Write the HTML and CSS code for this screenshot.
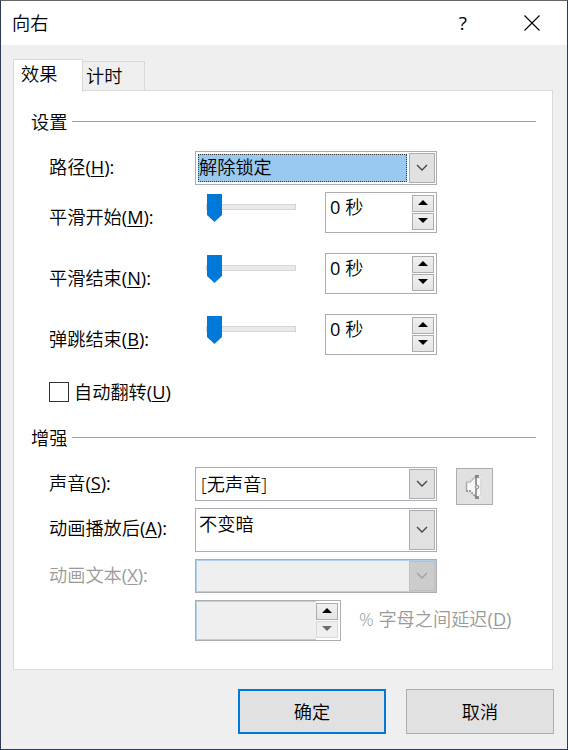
FILE: index.html
```html
<!DOCTYPE html>
<html lang="zh-CN">
<head>
  <meta charset="UTF-8">
  <title>向右</title>
  <link rel="stylesheet" href="styles.css">
</head>
<body>
  <div class="dialog">
    <div class="titlebar">
      <span class="title">向右</span>
      <span class="help">?</span>
      <svg class="close" width="16" height="16" viewBox="0 0 16 16"><path d="M.5 .5l15 15M15.5 .5l-15 15" fill="none" stroke="#000" stroke-width="1.1"/></svg>
    </div>

    <div class="tabs">
      <div class="tab active">效果</div>
      <div class="tab">计时</div>
    </div>

    <div class="panel">
      <div class="section"><span>设置</span></div>

      <div class="row">
        <label class="label">路径<span class="key">(<u>H</u>):</span></label>
        <div class="select">
          <span class="value selected">解除锁定</span>
          <span class="drop"><svg width="12" height="8" viewBox="0 0 12 8"><path d="M1 1l5 5 5-5"/></svg></span>
        </div>
      </div>

      <div class="row row-spin first">
        <label class="label">平滑开始<span class="key">(<u>M</u>):</span></label>
        <svg class="slider" width="130" height="41"><rect class="track" x="11.5" y="12.5" width="89" height="5"/><path class="thumb" d="M12 2h15v21l-7.5 7-7.5-7z"/></svg>
        <div class="spin">
          <span class="value"><span class="key">0</span> 秒</span>
          <span class="arrows">
            <span class="arrow"><svg width="10" height="5"><path d="M5 0l5 5H0z"/></svg></span>
            <span class="arrow"><svg width="10" height="5"><path d="M0 0h10L5 5z"/></svg></span>
          </span>
        </div>
      </div>

      <div class="row row-spin">
        <label class="label">平滑结束<span class="key">(<u>N</u>):</span></label>
        <svg class="slider" width="130" height="41"><rect class="track" x="11.5" y="12.5" width="89" height="5"/><path class="thumb" d="M12 2h15v21l-7.5 7-7.5-7z"/></svg>
        <div class="spin">
          <span class="value"><span class="key">0</span> 秒</span>
          <span class="arrows">
            <span class="arrow"><svg width="10" height="5"><path d="M5 0l5 5H0z"/></svg></span>
            <span class="arrow"><svg width="10" height="5"><path d="M0 0h10L5 5z"/></svg></span>
          </span>
        </div>
      </div>

      <div class="row row-spin">
        <label class="label">弹跳结束<span class="key">(<u>B</u>):</span></label>
        <svg class="slider" width="130" height="41"><rect class="track" x="11.5" y="12.5" width="89" height="5"/><path class="thumb" d="M12 2h15v21l-7.5 7-7.5-7z"/></svg>
        <div class="spin">
          <span class="value"><span class="key">0</span> 秒</span>
          <span class="arrows">
            <span class="arrow"><svg width="10" height="5"><path d="M5 0l5 5H0z"/></svg></span>
            <span class="arrow"><svg width="10" height="5"><path d="M0 0h10L5 5z"/></svg></span>
          </span>
        </div>
      </div>

      <div class="check-row">
        <span class="checkbox"></span>
        <label>自动翻转<span class="key">(<u>U</u>)</span></label>
      </div>

      <div class="section enhance"><span>增强</span></div>

      <div class="row">
        <label class="label">声音<span class="key">(<u>S</u>):</span></label>
        <div class="select">
          <span class="value sound">[无声音]</span>
          <span class="drop"><svg width="12" height="8" viewBox="0 0 12 8"><path d="M1 1l5 5 5-5"/></svg></span>
        </div>
        <div class="speaker">
          <svg width="18" height="26" viewBox="0 0 18 26">
            <path d="M1 8h4l6-6h4l2 4v14l-2 4h-4l-6-7H1z" fill="#f8f8f8"/>
            <path d="M1.500 8v9" stroke="#aaa" stroke-width="1.500"/>
            <path d="M1 8h4l6-6" fill="none" stroke="#bbb" stroke-width="1.500"/>
            <path d="M1 17h4l6 6" fill="none" stroke="#999" stroke-width="2" stroke-dasharray="2 1"/>
            <path d="M10 2.500h4M10 23.500h4" stroke="#888" stroke-width="3"/>
            <path d="M11 4v7M11 15v7" stroke="#999" stroke-width="2"/>
            <circle cx="12" cy="13" r="1.800" fill="#ddd" stroke="#888"/>
            <path d="M14 3.500l2 2v15l-2 2" fill="none" stroke="#c0c0c0"/>
          </svg>
        </div>
      </div>

      <div class="row row-after">
        <label class="label">动画播放后<span class="key">(<u>A</u>):</span></label>
        <div class="select tall">
          <span class="value">不变暗</span>
          <span class="drop"><svg width="12" height="8" viewBox="0 0 12 8"><path d="M1 1l5 5 5-5"/></svg></span>
        </div>
      </div>

      <div class="row row-text disabled">
        <label class="label">动画文本<span class="key">(<u>X</u>):</span></label>
        <div class="select">
          <span class="value"></span>
          <span class="drop"><svg width="12" height="8" viewBox="0 0 12 8"><path d="M1 1l5 5 5-5"/></svg></span>
        </div>
      </div>

      <div class="row row-delay disabled">
        <div class="spin">
          <span class="value"></span>
          <span class="arrows">
            <span class="arrow"><svg width="10" height="5"><path d="M5 0l5 5H0z"/></svg></span>
            <span class="arrow off"><svg width="10" height="5"><path d="M0 0h10L5 5z"/></svg></span>
          </span>
        </div>
        <label class="suffix">% 字母之间延迟<span class="key">(<u>D</u>)</span></label>
      </div>
    </div>

    <div class="buttons">
      <button class="btn btn-default">确定</button>
      <button class="btn">取消</button>
    </div>
  </div>
</body>
</html>
```

FILE: styles.css
```css
* {
  margin: 0;
  padding: 0;
  box-sizing: border-box;
}

body {
  width: 568px;
  height: 750px;
  font-family: "Open Sans", "Noto Sans CJK SC", sans-serif;
  font-size: 18.2px;
  font-weight: 350;
  line-height: 24px;
  color: #000;
  overflow: hidden;
}

svg {
  display: block;
  flex: none;
}

u {
  text-underline-offset: 2px;
  text-decoration-thickness: 1px;
}

.key {
  font-weight: 400;
}

.dialog {
  height: 750px;
  background: #efefef;
  border: 1px solid #2f3b54;
  border-top-color: #666;
}

.titlebar {
  display: flex;
  align-items: center;
  height: 44px;
  padding: 0 27px 0 11px;
  background: #fff;
}

.title {
  flex: 1;
}

.help {
  font-size: 19px;
  font-weight: 400;
  margin-right: 57px;
}

.tabs {
  display: flex;
  align-items: flex-end;
  height: 46px;
  padding-left: 12px;
}

.tab {
  width: 62px;
  height: 30px;
  padding: 2px 0 0 3px;
  border: 1px solid #d9d9d9;
  border-left: 0;
  border-bottom: 0;
}

.tab.active {
  position: relative;
  width: 70px;
  height: 33px;
  margin-bottom: -1px;
  padding: 2px 0 0 7px;
  background: #fff;
  border-left: 1px solid #d9d9d9;
}

.panel {
  width: 540px;
  height: 580px;
  margin-left: 12px;
  margin-top: -1px;
  padding-top: 19px;
  background: #fff;
  border: 1px solid #d9d9d9;
}

.section {
  display: flex;
  height: 24px;
  margin: 0 16px 17px 17px;
}

.section span {
  width: 41px;
}

.section::after {
  content: "";
  flex: 1;
  height: 1px;
  margin-top: 11px;
  background: #a0a0a0;
}

.section.enhance {
  margin-top: 22px;
}

.row {
  display: flex;
  align-items: flex-start;
  padding-left: 35px;
}

.row .label {
  width: 146px;
  margin-top: 4px;
  white-space: nowrap;
}

.row-spin {
  margin-top: 20px;
}

.row-spin.first {
  margin-top: 7px;
}

.row-spin .label {
  margin-top: 13px;
}

.select {
  display: flex;
  width: 242px;
  height: 34px;
  padding: 1px;
  border: 1px solid #abadb3;
}

.select.tall {
  height: 44px;
}

.select .value {
  flex: 1;
  padding: 2px 0 0 2px;
}

.select .value.sound {
  padding: 3px 0 0 4px;
}

.select .value.selected {
  margin: 1px 2px 1px 1px;
  padding: 0;
  background: #99c9ef;
  border: 1px dotted #333;
}

.drop {
  display: flex;
  align-items: center;
  justify-content: center;
  width: 26px;
  background: #e1e1e1;
  border: 1px solid #adadad;
}

.drop path {
  fill: none;
  stroke: #444;
  stroke-width: 1.3;
}

.track {
  fill: #e7eaea;
  stroke: #d6d6d6;
}

.thumb {
  fill: #0078d7;
}

.spin {
  display: flex;
  width: 112px;
  height: 41px;
  border: 1px solid #abadb3;
}

.spin .value {
  flex: 1;
  padding: 2px 0 0 4px;
}

.arrows {
  display: flex;
  flex-direction: column;
  gap: 1px;
  width: 24px;
  padding: 2px 2px 2px 0;
}

.arrow {
  display: flex;
  justify-content: center;
  width: 22px;
  height: 17px;
  padding-top: 4px;
  background: linear-gradient(#f0f0f0, #e4e4e4);
  border: 1px solid #acacac;
}

.check-row {
  display: flex;
  height: 24px;
  margin: 25px 0 0 35px;
}

.checkbox {
  width: 20px;
  height: 20px;
  margin: 2px 5px 0 0;
  border: 1px solid #333;
}

.speaker {
  display: flex;
  align-items: center;
  justify-content: center;
  width: 37px;
  height: 37px;
  margin: 1px 0 -4px 19px;
  padding-right: 2px;
  background: #e1e1e1;
  border: 1px solid #adadad;
}

.row-after {
  margin-top: 7px;
}

.row-after .label {
  margin-top: 8px;
}

.row-text {
  margin-top: 7px;
}

.disabled {
  color: #9a9a9a;
}

.disabled .select {
  background: #b4cfe9;
}

.disabled .select .value {
  background: #efefef;
}

.disabled .drop {
  background: #ccc;
  border-color: #bfbfbf;
}

.disabled .drop path {
  stroke: #a0a0a0;
}

.row-delay {
  margin-top: 7px;
  padding-left: 181px;
}

.row-delay .spin {
  width: 146px;
}

.row-delay .spin .value {
  background: #efefef;
  border: 1px solid #b4cfe9;
  border-right: 0;
}

.arrow.off {
  background: #efefef;
  border-color: #d9d9d9;
}

.arrow.off path {
  fill: #6d6d6d;
}

.suffix {
  margin: 7px 0 0 18px;
}

.buttons {
  display: flex;
  justify-content: flex-end;
  gap: 20px;
  margin-top: 19px;
  padding-right: 13px;
}

.btn {
  width: 148px;
  height: 45px;
  font: inherit;
  color: #000;
  background: #e1e1e1;
  border: 1px solid #adadad;
}

.btn-default {
  border: 2px solid #0078d7;
}
```
